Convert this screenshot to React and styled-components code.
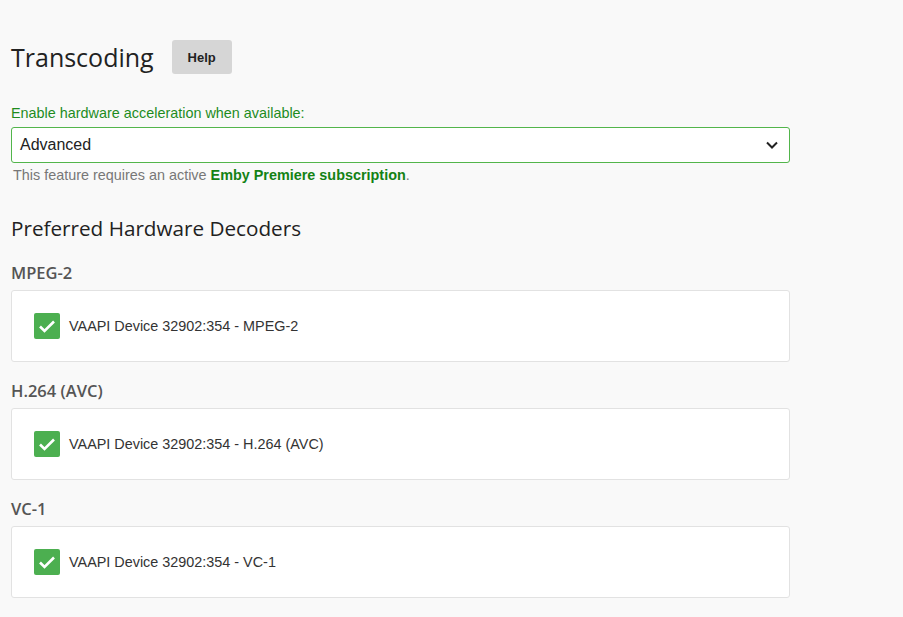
import React from "react";
import styled, { createGlobalStyle } from "styled-components";

const Global = createGlobalStyle`
  html, body { margin: 0; padding: 0; background: #f9f9f9; }
  body { font-family: "Liberation Sans", Arial, sans-serif; color: #333; }
`;

const Page = styled.div`
  padding: 40px 0 20px 11px;
  width: 779px;
`;

const TitleRow = styled.div`
  display: flex;
  align-items: center;
  gap: 18px;
`;

const Title = styled.h1`
  margin: 0;
  font-family: "Open Sans", sans-serif;
  font-weight: 400;
  font-size: 25px;
  line-height: 34px;
  color: #222;
`;

const HelpButton = styled.button`
  width: 60px;
  height: 34px;
  border: none;
  border-radius: 3px;
  background: #d6d6d6;
  font-family: "Liberation Sans", Arial, sans-serif;
  font-weight: 700;
  font-size: 13px;
  color: #222;
  padding: 0;
`;

const Field = styled.div`
  margin-top: 31px;
`;

const Label = styled.label`
  display: block;
  font-size: 14.4px;
  line-height: 17px;
  color: #1e8c1e;
  margin-bottom: 5px;
`;

const SelectBox = styled.div`
  height: 36px;
  box-sizing: border-box;
  border: 1px solid #52b54b;
  border-radius: 3px;
  background: #fff;
  display: flex;
  align-items: center;
  justify-content: space-between;
  padding: 0 10px 0 8px;
  font-size: 16px;
  color: #222;
`;

const Helper = styled.div`
  margin-top: 4px;
  margin-left: 2px;
  font-size: 14.4px;
  line-height: 17px;
  color: #777;
  b { color: #148214; font-weight: 700; }
`;

const SectionTitle = styled.h2`
  margin: 30px 0 0;
  font-family: "Open Sans", sans-serif;
  font-weight: 400;
  font-size: 20.7px;
  line-height: 28px;
  color: #222;
`;

const Group = styled.div`
  margin-top: ${(p) => (p.$first ? "20px" : "18px")};
`;

const GroupTitle = styled.h3`
  margin: 0 0 6px;
  font-family: "Open Sans", sans-serif;
  font-weight: 600;
  font-size: 16.5px;
  line-height: 22px;
  color: #555;
`;

const Card = styled.div`
  height: 72px;
  box-sizing: border-box;
  background: #fff;
  border: 1px solid #e2e2e2;
  border-radius: 3px;
  display: flex;
  align-items: center;
  padding-left: 22px;
`;

const Check = styled.span`
  width: 26px;
  height: 26px;
  border-radius: 2px;
  background: #4caf50;
  display: inline-flex;
  align-items: center;
  justify-content: center;
  margin-right: 9px;
`;

const ItemText = styled.span`
  font-size: 14.4px;
  color: #333;
`;

const Chevron = () => (
  <svg width="14" height="14" viewBox="0 0 14 14">
    <path d="M2 4.5 L7 9.5 L12 4.5" fill="none" stroke="#222" strokeWidth="2" />
  </svg>
);

const Tick = () => (
  <svg width="20" height="20" viewBox="0 0 20 20">
    <path d="M3 10.5 L7.5 15 L17 5.5" fill="none" stroke="#fff" strokeWidth="2.6" />
  </svg>
);

const groups = [
  { name: "MPEG-2", item: "VAAPI Device 32902:354 - MPEG-2" },
  { name: "H.264 (AVC)", item: "VAAPI Device 32902:354 - H.264 (AVC)" },
  { name: "VC-1", item: "VAAPI Device 32902:354 - VC-1" },
];

export default function App() {
  return (
    <>
      <Global />
      <Page>
        <TitleRow>
          <Title>Transcoding</Title>
          <HelpButton>Help</HelpButton>
        </TitleRow>
        <Field>
          <Label>Enable hardware acceleration when available:</Label>
          <SelectBox>
            <span>Advanced</span>
            <Chevron />
          </SelectBox>
          <Helper>
            This feature requires an active <b>Emby Premiere subscription</b>.
          </Helper>
        </Field>
        <SectionTitle>Preferred Hardware Decoders</SectionTitle>
        {groups.map((g, i) => (
          <Group key={g.name} $first={i === 0}>
            <GroupTitle>{g.name}</GroupTitle>
            <Card>
              <Check><Tick /></Check>
              <ItemText>{g.item}</ItemText>
            </Card>
          </Group>
        ))}
      </Page>
    </>
  );
}
